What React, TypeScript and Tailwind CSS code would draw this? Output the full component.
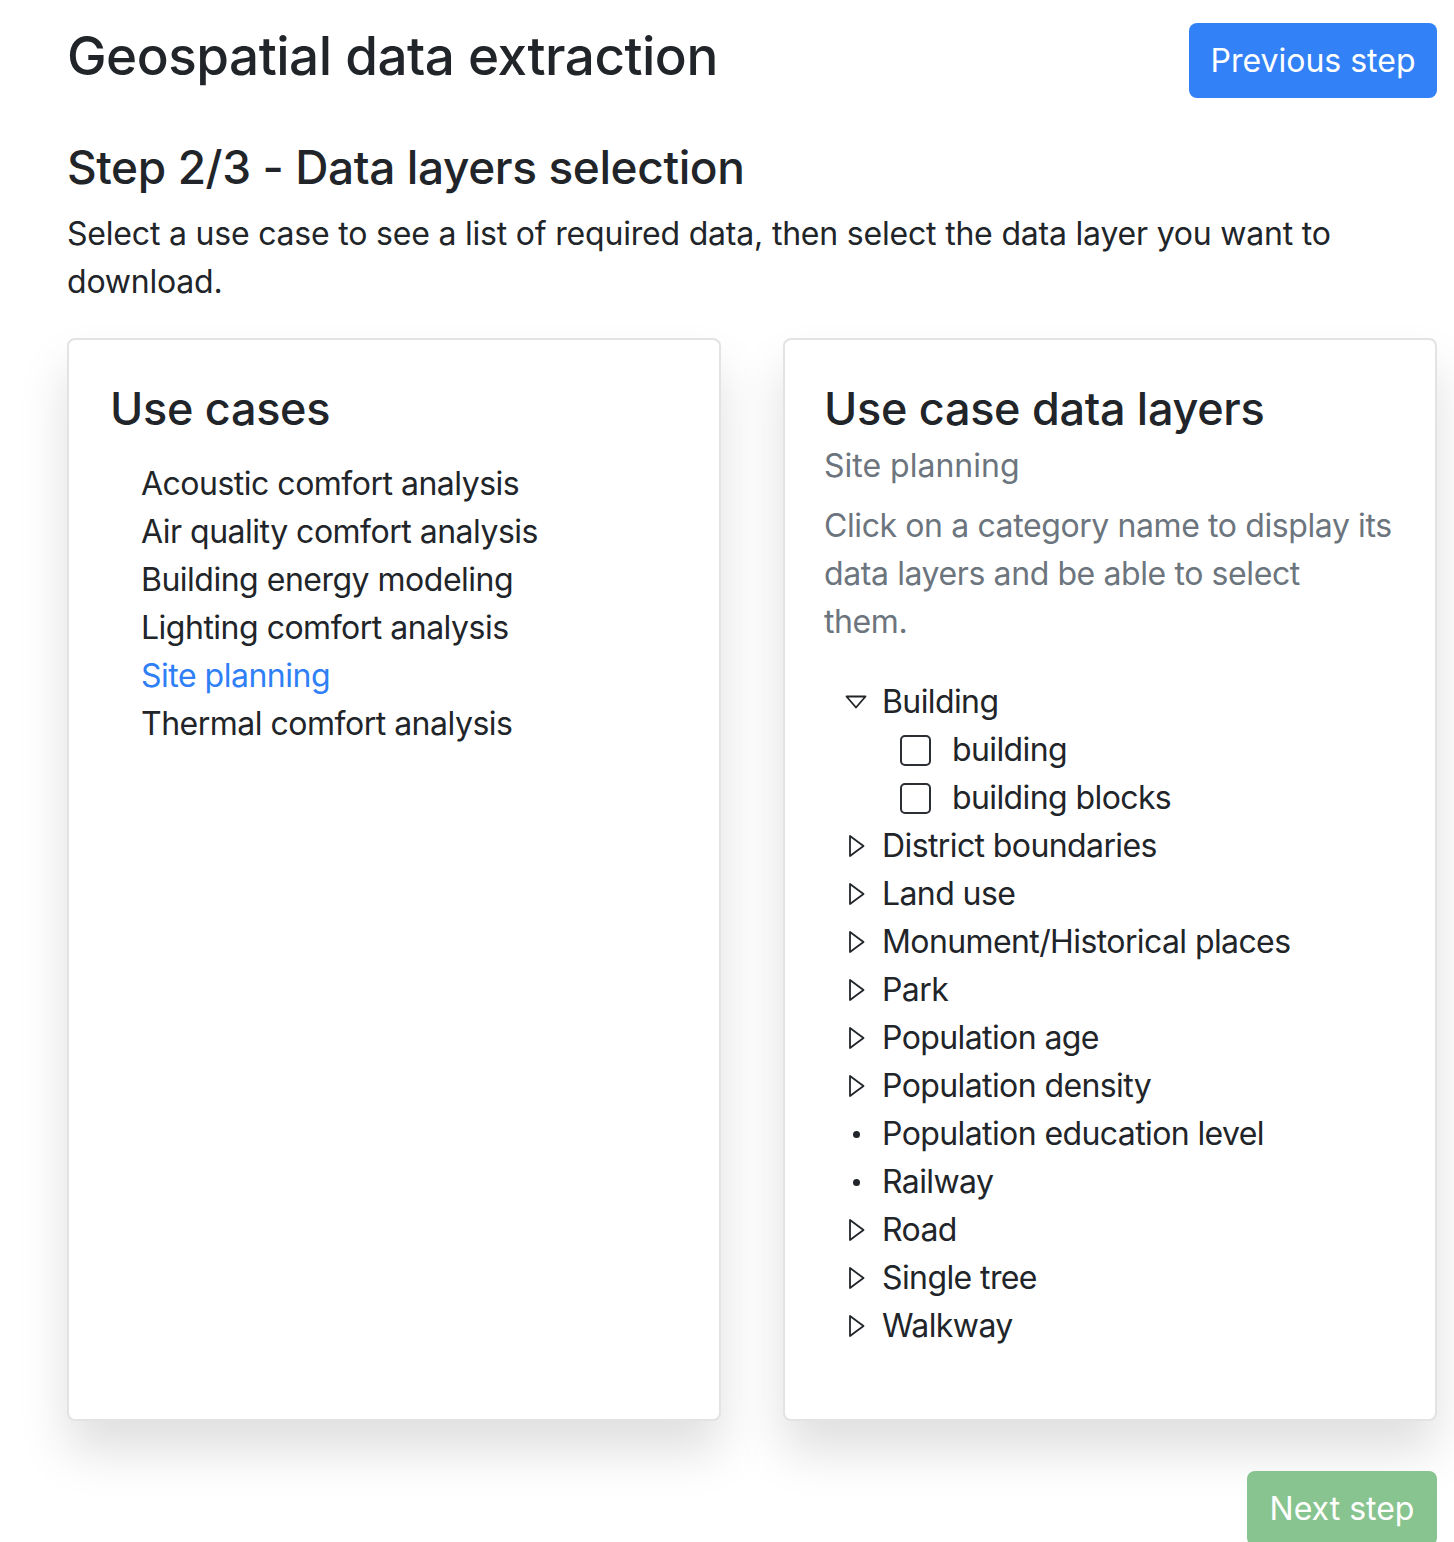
import React, { useState } from "react";

const useCases = [
  "Acoustic comfort analysis",
  "Air quality comfort analysis",
  "Building energy modeling",
  "Lighting comfort analysis",
  "Site planning",
  "Thermal comfort analysis",
];

type Category = { name: string; kind: "open" | "closed" | "leaf"; layers?: string[] };

const categories: Category[] = [
  { name: "Building", kind: "open", layers: ["building", "building blocks"] },
  { name: "District boundaries", kind: "closed" },
  { name: "Land use", kind: "closed" },
  { name: "Monument/Historical places", kind: "closed" },
  { name: "Park", kind: "closed" },
  { name: "Population age", kind: "closed" },
  { name: "Population density", kind: "closed" },
  { name: "Population education level", kind: "leaf" },
  { name: "Railway", kind: "leaf" },
  { name: "Road", kind: "closed" },
  { name: "Single tree", kind: "closed" },
  { name: "Walkway", kind: "closed" },
];

function Marker({ kind }: { kind: Category["kind"] }) {
  if (kind === "open") {
    return (
      <svg width="24" height="16" viewBox="0 0 24 16" className="text-[#212529]">
        <path d="M2.5 2.5 L21.5 2.5 L12 13.5 Z" fill="none" stroke="currentColor" strokeWidth="1.8" strokeLinejoin="round" />
      </svg>
    );
  }
  if (kind === "closed") {
    return (
      <svg width="24" height="24" viewBox="0 0 24 24" className="text-[#212529]">
        <path d="M6 2 L19.5 12 L6 22 Z" fill="none" stroke="currentColor" strokeWidth="1.8" strokeLinejoin="round" />
      </svg>
    );
  }
  return <span className="block h-[7px] w-[7px] rounded-full bg-[#212529]" />;
}

export default function App() {
  const [selected, setSelected] = useState("Site planning");
  const [checked, setChecked] = useState<Record<string, boolean>>({});

  return (
    <div className="min-h-screen bg-white pl-[67px] pr-[17px] pt-[23px] text-[#212529] font-['Inter','Noto_Sans',sans-serif]">
      <div className="flex items-start justify-between">
        <h1 className="text-[53px] font-medium leading-[67px] tracking-[-0.5px]">Geospatial data extraction</h1>
        <button className="h-[75px] w-[248px] rounded-lg bg-[#3381f6] text-[32px] text-white">Previous step</button>
      </div>

      <h2 className="mt-[36px] text-[46px] font-medium leading-[67px] tracking-[-0.4px]">Step 2/3 - Data layers selection</h2>
      <p className="mt-[9px] text-[32px] leading-[48px] tracking-[-0.2px]">
        Select a use case to see a list of required data, then select the data layer you want to download.
      </p>

      <div className="mt-[32px] grid grid-cols-2 gap-[62px]">
        <div className="h-[1083px] rounded-lg border-2 border-[#e3e3e3] bg-white px-[41px] pt-[40px] shadow-[0_30px_50px_rgba(0,0,0,0.13)]">
          <h3 className="text-[45px] font-medium leading-[58px] tracking-[-0.3px]">Use cases</h3>
          <ul className="mt-[22px] pl-[31px]">
            {useCases.map((u) => (
              <li key={u}>
                <button
                  onClick={() => setSelected(u)}
                  className={`text-[32px] leading-[48px] tracking-[-0.5px] ${selected === u ? "text-[#2f80f6]" : "text-[#212529]"}`}
                >
                  {u}
                </button>
              </li>
            ))}
          </ul>
        </div>

        <div className="h-[1083px] rounded-lg border-2 border-[#e3e3e3] bg-white px-[39px] pt-[40px] shadow-[0_30px_50px_rgba(0,0,0,0.13)]">
          <h3 className="text-[45px] font-medium leading-[58px] tracking-[-0.3px]">Use case data layers</h3>
          <p className="mt-[4px] text-[32px] leading-[48px] text-[#6c757d]">{selected}</p>
          <p className="mt-[12px] whitespace-nowrap text-[32px] leading-[48px] tracking-[-0.4px] text-[#6c757d]">
            Click on a category name to display its
            <br />
            data layers and be able to select
            <br />
            them.
          </p>

          <ul className="mt-[32px] pl-[20px]">
            {categories.map((c) => (
              <li key={c.name}>
                <div className="flex h-[48px] items-center">
                  <span className="flex w-[24px] justify-center">
                    <Marker kind={c.kind} />
                  </span>
                  <span className="ml-[14px] text-[32px] tracking-[-0.6px]">{c.name}</span>
                </div>
                {c.layers &&
                  c.layers.map((l) => (
                    <label key={l} className="flex h-[48px] items-center pl-[56px]">
                      <input
                        type="checkbox"
                        checked={!!checked[l]}
                        onChange={() => setChecked({ ...checked, [l]: !checked[l] })}
                        className="h-[31px] w-[31px] appearance-none rounded-[5px] border-2 border-[#2b2f33] bg-white"
                      />
                      <span className="ml-[21px] text-[32px] tracking-[-0.6px]">{l}</span>
                    </label>
                  ))}
              </li>
            ))}
          </ul>
        </div>
      </div>

      <div className="mt-[50px] flex justify-end">
        <button disabled className="h-[75px] w-[190px] rounded-lg bg-[#88c48f] text-[32px] text-white">Next step</button>
      </div>
    </div>
  );
}
